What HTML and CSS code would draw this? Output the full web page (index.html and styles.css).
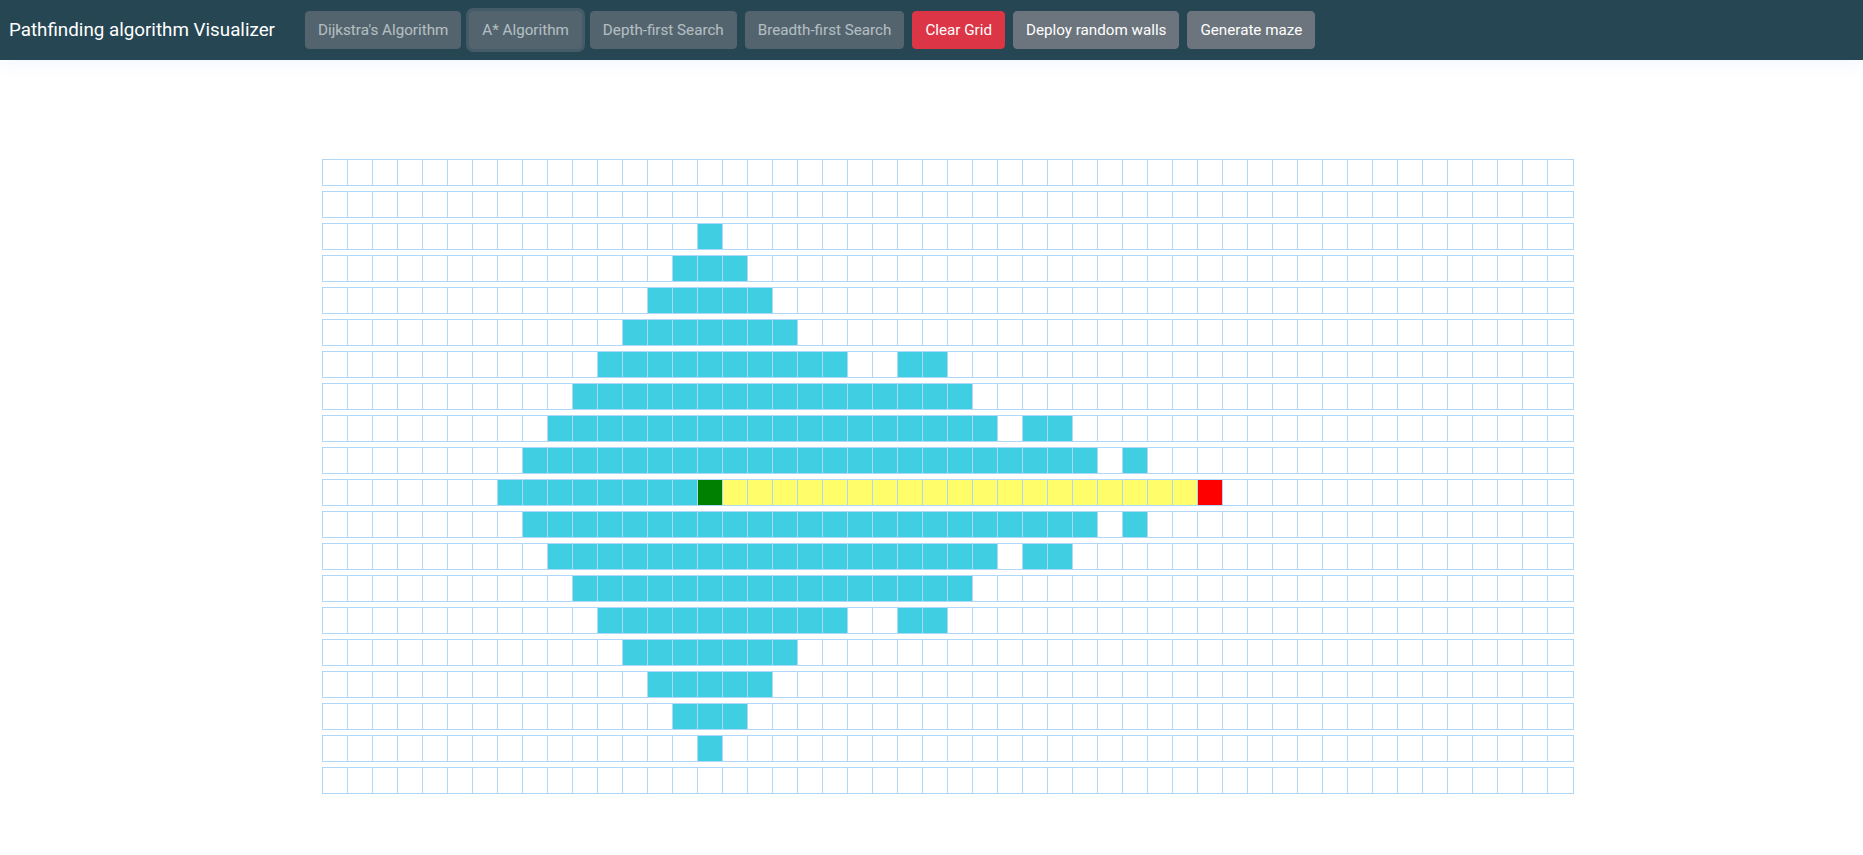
FILE: index.html
```html
<!DOCTYPE html>
<html lang="en">
<head>
<meta charset="utf-8">
<title>Pathfinding algorithm Visualizer</title>
<link rel="stylesheet" href="styles.css">
</head>
<body>
<nav class="navbar">
  <span class="brand">Pathfinding algorithm Visualizer</span>
  <div class="actions">
    <button class="btn btn-secondary" disabled>Dijkstra's Algorithm</button>
    <button class="btn btn-secondary is-focused" disabled>A* Algorithm</button>
    <button class="btn btn-secondary" disabled>Depth-first Search</button>
    <button class="btn btn-secondary" disabled>Breadth-first Search</button>
    <button class="btn btn-danger">Clear Grid</button>
    <button class="btn btn-secondary">Deploy random walls</button>
    <button class="btn btn-secondary">Generate maze</button>
  </div>
</nav>
<main class="grid">
<div class="row">
<span></span><span></span><span></span><span></span><span></span><span></span><span></span><span></span><span></span><span></span>
<span></span><span></span><span></span><span></span><span></span><span></span><span></span><span></span><span></span><span></span>
<span></span><span></span><span></span><span></span><span></span><span></span><span></span><span></span><span></span><span></span>
<span></span><span></span><span></span><span></span><span></span><span></span><span></span><span></span><span></span><span></span>
<span></span><span></span><span></span><span></span><span></span><span></span><span></span><span></span><span></span><span></span>
</div>
<div class="row">
<span></span><span></span><span></span><span></span><span></span><span></span><span></span><span></span><span></span><span></span>
<span></span><span></span><span></span><span></span><span></span><span></span><span></span><span></span><span></span><span></span>
<span></span><span></span><span></span><span></span><span></span><span></span><span></span><span></span><span></span><span></span>
<span></span><span></span><span></span><span></span><span></span><span></span><span></span><span></span><span></span><span></span>
<span></span><span></span><span></span><span></span><span></span><span></span><span></span><span></span><span></span><span></span>
</div>
<div class="row">
<span></span><span></span><span></span><span></span><span></span><span></span><span></span><span></span><span></span><span></span>
<span></span><span></span><span></span><span></span><span></span>
<span class="visited"></span>
<span></span><span></span><span></span><span></span>
<span></span><span></span><span></span><span></span><span></span><span></span><span></span><span></span><span></span><span></span>
<span></span><span></span><span></span><span></span><span></span><span></span><span></span><span></span><span></span><span></span>
<span></span><span></span><span></span><span></span><span></span><span></span><span></span><span></span><span></span><span></span>
</div>
<div class="row">
<span></span><span></span><span></span><span></span><span></span><span></span><span></span><span></span><span></span><span></span>
<span></span><span></span><span></span><span></span>
<span class="visited"></span><span class="visited"></span><span class="visited"></span>
<span></span><span></span><span></span>
<span></span><span></span><span></span><span></span><span></span><span></span><span></span><span></span><span></span><span></span>
<span></span><span></span><span></span><span></span><span></span><span></span><span></span><span></span><span></span><span></span>
<span></span><span></span><span></span><span></span><span></span><span></span><span></span><span></span><span></span><span></span>
</div>
<div class="row">
<span></span><span></span><span></span><span></span><span></span><span></span><span></span><span></span><span></span><span></span>
<span></span><span></span><span></span>
<span class="visited"></span><span class="visited"></span><span class="visited"></span><span class="visited"></span><span class="visited"></span>
<span></span><span></span>
<span></span><span></span><span></span><span></span><span></span><span></span><span></span><span></span><span></span><span></span>
<span></span><span></span><span></span><span></span><span></span><span></span><span></span><span></span><span></span><span></span>
<span></span><span></span><span></span><span></span><span></span><span></span><span></span><span></span><span></span><span></span>
</div>
<div class="row">
<span></span><span></span><span></span><span></span><span></span><span></span><span></span><span></span><span></span><span></span>
<span></span><span></span>
<span class="visited"></span><span class="visited"></span><span class="visited"></span><span class="visited"></span><span class="visited"></span><span class="visited"></span><span class="visited"></span>
<span></span>
<span></span><span></span><span></span><span></span><span></span><span></span><span></span><span></span><span></span><span></span>
<span></span><span></span><span></span><span></span><span></span><span></span><span></span><span></span><span></span><span></span>
<span></span><span></span><span></span><span></span><span></span><span></span><span></span><span></span><span></span><span></span>
</div>
<div class="row">
<span></span><span></span><span></span><span></span><span></span><span></span><span></span><span></span><span></span><span></span>
<span></span>
<span class="visited"></span><span class="visited"></span><span class="visited"></span><span class="visited"></span><span class="visited"></span><span class="visited"></span><span class="visited"></span><span class="visited"></span><span class="visited"></span><span class="visited"></span>
<span></span><span></span>
<span class="visited"></span><span class="visited"></span>
<span></span><span></span><span></span><span></span><span></span>
<span></span><span></span><span></span><span></span><span></span><span></span><span></span><span></span><span></span><span></span>
<span></span><span></span><span></span><span></span><span></span><span></span><span></span><span></span><span></span><span></span>
</div>
<div class="row">
<span></span><span></span><span></span><span></span><span></span><span></span><span></span><span></span><span></span><span></span>
<span class="visited"></span><span class="visited"></span><span class="visited"></span><span class="visited"></span><span class="visited"></span><span class="visited"></span><span class="visited"></span><span class="visited"></span><span class="visited"></span><span class="visited"></span>
<span class="visited"></span><span class="visited"></span><span class="visited"></span><span class="visited"></span><span class="visited"></span><span class="visited"></span>
<span></span><span></span><span></span><span></span>
<span></span><span></span><span></span><span></span><span></span><span></span><span></span><span></span><span></span><span></span>
<span></span><span></span><span></span><span></span><span></span><span></span><span></span><span></span><span></span><span></span>
</div>
<div class="row">
<span></span><span></span><span></span><span></span><span></span><span></span><span></span><span></span><span></span>
<span class="visited"></span><span class="visited"></span><span class="visited"></span><span class="visited"></span><span class="visited"></span><span class="visited"></span><span class="visited"></span><span class="visited"></span><span class="visited"></span><span class="visited"></span>
<span class="visited"></span><span class="visited"></span><span class="visited"></span><span class="visited"></span><span class="visited"></span><span class="visited"></span><span class="visited"></span><span class="visited"></span>
<span></span>
<span class="visited"></span><span class="visited"></span>
<span></span><span></span><span></span><span></span><span></span><span></span><span></span><span></span><span></span><span></span>
<span></span><span></span><span></span><span></span><span></span><span></span><span></span><span></span><span></span><span></span>
</div>
<div class="row">
<span></span><span></span><span></span><span></span><span></span><span></span><span></span><span></span>
<span class="visited"></span><span class="visited"></span><span class="visited"></span><span class="visited"></span><span class="visited"></span><span class="visited"></span><span class="visited"></span><span class="visited"></span><span class="visited"></span><span class="visited"></span>
<span class="visited"></span><span class="visited"></span><span class="visited"></span><span class="visited"></span><span class="visited"></span><span class="visited"></span><span class="visited"></span><span class="visited"></span><span class="visited"></span><span class="visited"></span>
<span class="visited"></span><span class="visited"></span><span class="visited"></span>
<span></span>
<span class="visited"></span>
<span></span><span></span><span></span><span></span><span></span><span></span><span></span>
<span></span><span></span><span></span><span></span><span></span><span></span><span></span><span></span><span></span><span></span>
</div>
<div class="row">
<span></span><span></span><span></span><span></span><span></span><span></span><span></span>
<span class="visited"></span><span class="visited"></span><span class="visited"></span><span class="visited"></span><span class="visited"></span><span class="visited"></span><span class="visited"></span><span class="visited"></span>
<span class="start"></span>
<span class="path"></span><span class="path"></span><span class="path"></span><span class="path"></span><span class="path"></span><span class="path"></span><span class="path"></span><span class="path"></span><span class="path"></span><span class="path"></span>
<span class="path"></span><span class="path"></span><span class="path"></span><span class="path"></span><span class="path"></span><span class="path"></span><span class="path"></span><span class="path"></span><span class="path"></span>
<span class="target"></span>
<span></span><span></span><span></span><span></span>
<span></span><span></span><span></span><span></span><span></span><span></span><span></span><span></span><span></span><span></span>
</div>
<div class="row">
<span></span><span></span><span></span><span></span><span></span><span></span><span></span><span></span>
<span class="visited"></span><span class="visited"></span><span class="visited"></span><span class="visited"></span><span class="visited"></span><span class="visited"></span><span class="visited"></span><span class="visited"></span><span class="visited"></span><span class="visited"></span>
<span class="visited"></span><span class="visited"></span><span class="visited"></span><span class="visited"></span><span class="visited"></span><span class="visited"></span><span class="visited"></span><span class="visited"></span><span class="visited"></span><span class="visited"></span>
<span class="visited"></span><span class="visited"></span><span class="visited"></span>
<span></span>
<span class="visited"></span>
<span></span><span></span><span></span><span></span><span></span><span></span><span></span>
<span></span><span></span><span></span><span></span><span></span><span></span><span></span><span></span><span></span><span></span>
</div>
<div class="row">
<span></span><span></span><span></span><span></span><span></span><span></span><span></span><span></span><span></span>
<span class="visited"></span><span class="visited"></span><span class="visited"></span><span class="visited"></span><span class="visited"></span><span class="visited"></span><span class="visited"></span><span class="visited"></span><span class="visited"></span><span class="visited"></span>
<span class="visited"></span><span class="visited"></span><span class="visited"></span><span class="visited"></span><span class="visited"></span><span class="visited"></span><span class="visited"></span><span class="visited"></span>
<span></span>
<span class="visited"></span><span class="visited"></span>
<span></span><span></span><span></span><span></span><span></span><span></span><span></span><span></span><span></span><span></span>
<span></span><span></span><span></span><span></span><span></span><span></span><span></span><span></span><span></span><span></span>
</div>
<div class="row">
<span></span><span></span><span></span><span></span><span></span><span></span><span></span><span></span><span></span><span></span>
<span class="visited"></span><span class="visited"></span><span class="visited"></span><span class="visited"></span><span class="visited"></span><span class="visited"></span><span class="visited"></span><span class="visited"></span><span class="visited"></span><span class="visited"></span>
<span class="visited"></span><span class="visited"></span><span class="visited"></span><span class="visited"></span><span class="visited"></span><span class="visited"></span>
<span></span><span></span><span></span><span></span>
<span></span><span></span><span></span><span></span><span></span><span></span><span></span><span></span><span></span><span></span>
<span></span><span></span><span></span><span></span><span></span><span></span><span></span><span></span><span></span><span></span>
</div>
<div class="row">
<span></span><span></span><span></span><span></span><span></span><span></span><span></span><span></span><span></span><span></span>
<span></span>
<span class="visited"></span><span class="visited"></span><span class="visited"></span><span class="visited"></span><span class="visited"></span><span class="visited"></span><span class="visited"></span><span class="visited"></span><span class="visited"></span><span class="visited"></span>
<span></span><span></span>
<span class="visited"></span><span class="visited"></span>
<span></span><span></span><span></span><span></span><span></span>
<span></span><span></span><span></span><span></span><span></span><span></span><span></span><span></span><span></span><span></span>
<span></span><span></span><span></span><span></span><span></span><span></span><span></span><span></span><span></span><span></span>
</div>
<div class="row">
<span></span><span></span><span></span><span></span><span></span><span></span><span></span><span></span><span></span><span></span>
<span></span><span></span>
<span class="visited"></span><span class="visited"></span><span class="visited"></span><span class="visited"></span><span class="visited"></span><span class="visited"></span><span class="visited"></span>
<span></span>
<span></span><span></span><span></span><span></span><span></span><span></span><span></span><span></span><span></span><span></span>
<span></span><span></span><span></span><span></span><span></span><span></span><span></span><span></span><span></span><span></span>
<span></span><span></span><span></span><span></span><span></span><span></span><span></span><span></span><span></span><span></span>
</div>
<div class="row">
<span></span><span></span><span></span><span></span><span></span><span></span><span></span><span></span><span></span><span></span>
<span></span><span></span><span></span>
<span class="visited"></span><span class="visited"></span><span class="visited"></span><span class="visited"></span><span class="visited"></span>
<span></span><span></span>
<span></span><span></span><span></span><span></span><span></span><span></span><span></span><span></span><span></span><span></span>
<span></span><span></span><span></span><span></span><span></span><span></span><span></span><span></span><span></span><span></span>
<span></span><span></span><span></span><span></span><span></span><span></span><span></span><span></span><span></span><span></span>
</div>
<div class="row">
<span></span><span></span><span></span><span></span><span></span><span></span><span></span><span></span><span></span><span></span>
<span></span><span></span><span></span><span></span>
<span class="visited"></span><span class="visited"></span><span class="visited"></span>
<span></span><span></span><span></span>
<span></span><span></span><span></span><span></span><span></span><span></span><span></span><span></span><span></span><span></span>
<span></span><span></span><span></span><span></span><span></span><span></span><span></span><span></span><span></span><span></span>
<span></span><span></span><span></span><span></span><span></span><span></span><span></span><span></span><span></span><span></span>
</div>
<div class="row">
<span></span><span></span><span></span><span></span><span></span><span></span><span></span><span></span><span></span><span></span>
<span></span><span></span><span></span><span></span><span></span>
<span class="visited"></span>
<span></span><span></span><span></span><span></span>
<span></span><span></span><span></span><span></span><span></span><span></span><span></span><span></span><span></span><span></span>
<span></span><span></span><span></span><span></span><span></span><span></span><span></span><span></span><span></span><span></span>
<span></span><span></span><span></span><span></span><span></span><span></span><span></span><span></span><span></span><span></span>
</div>
<div class="row">
<span></span><span></span><span></span><span></span><span></span><span></span><span></span><span></span><span></span><span></span>
<span></span><span></span><span></span><span></span><span></span><span></span><span></span><span></span><span></span><span></span>
<span></span><span></span><span></span><span></span><span></span><span></span><span></span><span></span><span></span><span></span>
<span></span><span></span><span></span><span></span><span></span><span></span><span></span><span></span><span></span><span></span>
<span></span><span></span><span></span><span></span><span></span><span></span><span></span><span></span><span></span><span></span>
</div>
</main>
</body>
</html>
```

FILE: styles.css
```css
* {
  box-sizing: border-box;
}

html,
body {
  margin: 0;
  background: #fff;
}

body {
  font-family: Roboto, "Liberation Sans", sans-serif;
  font-size: 16px;
  line-height: 1.5;
  color: #212529;
}

.navbar {
  display: flex;
  align-items: center;
  height: 60px;
  padding: 0 9px;
  background: #264653;
  box-shadow: 0 4px 16px rgba(0, 110, 230, 0.06);
  position: relative;
}

.brand {
  color: #fff;
  font-size: 18.8px;
  line-height: 30px;
  margin-right: 30px;
  white-space: nowrap;
}

.actions {
  display: flex;
  align-items: center;
  gap: 8px;
}

.btn {
  font-family: inherit;
  font-size: 15.2px;
  line-height: 24px;
  padding: 6px 12px;
  height: 38px;
  border: 1px solid transparent;
  border-radius: 4px;
  color: #fff;
  white-space: nowrap;
  cursor: pointer;
}

.btn:disabled {
  opacity: 0.65;
  cursor: default;
}

.btn-secondary {
  background: #6c757d;
  border-color: #6c757d;
}

.btn-danger {
  background: #dc3545;
  border-color: #dc3545;
}

.is-focused {
  box-shadow: 0 0 0 3px rgba(130, 138, 145, 0.5);
}

.grid {
  display: flex;
  flex-direction: column;
  gap: 7px;
  margin: 100px 0 0 323px;
  padding-bottom: 40px;
}

.row {
  display: flex;
}

.row > span {
  flex: none;
  width: 25px;
  height: 25px;
  background: #fff;
  outline: 1px solid rgb(175, 216, 248);
}

.row > .visited {
  background: rgb(64, 206, 227);
}

.row > .path {
  background: rgb(255, 254, 106);
}

.row > .start {
  background: #008000;
}

.row > .target {
  background: #ff0000;
}
```
